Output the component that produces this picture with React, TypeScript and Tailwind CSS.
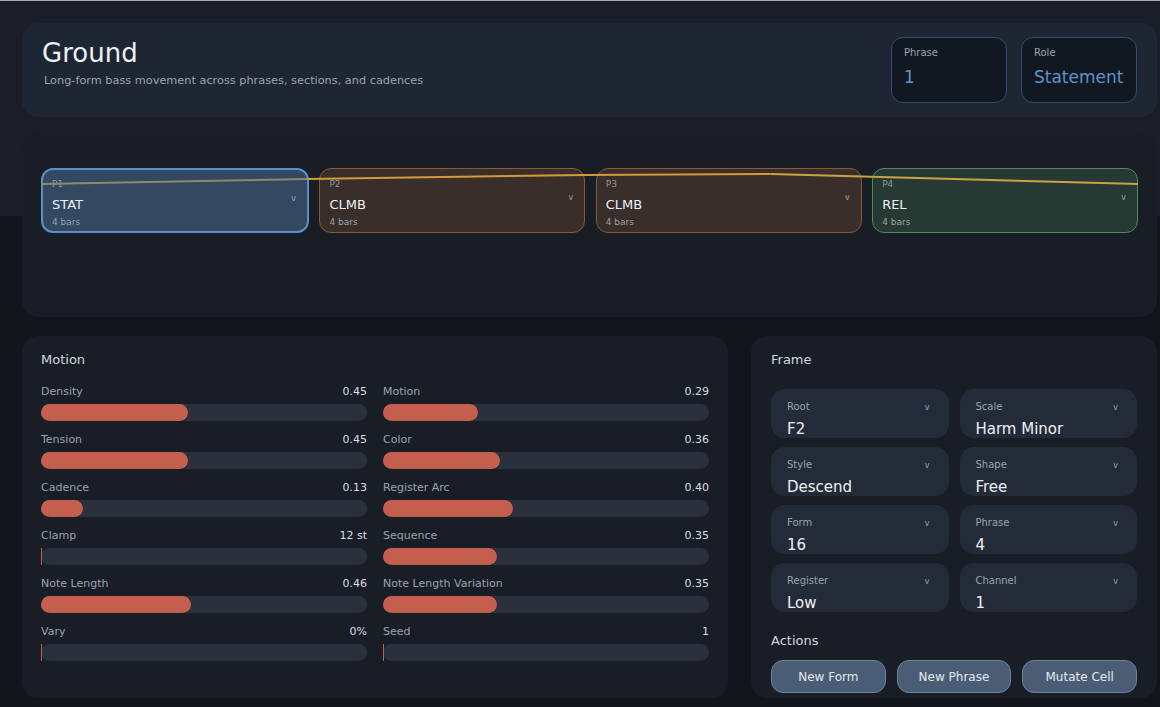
import React from 'react';

type Phrase = {
  id: string;
  role: string;
  bars: number;
  tone: 'stat' | 'climb' | 'rel';
};

type Knob = {
  label: string;
  value: string;
  amount: number;
};

const phrases: Phrase[] = [
  { id: 'P1', role: 'STAT', bars: 4, tone: 'stat' },
  { id: 'P2', role: 'CLMB', bars: 4, tone: 'climb' },
  { id: 'P3', role: 'CLMB', bars: 4, tone: 'climb' },
  { id: 'P4', role: 'REL', bars: 4, tone: 'rel' },
];

const leftKnobs: Knob[] = [
  { label: 'Density', value: '0.45', amount: 0.45 },
  { label: 'Tension', value: '0.45', amount: 0.45 },
  { label: 'Cadence', value: '0.13', amount: 0.13 },
  { label: 'Clamp', value: '12 st', amount: 0 },
  { label: 'Note Length', value: '0.46', amount: 0.46 },
  { label: 'Vary', value: '0%', amount: 0 },
];

const rightKnobs: Knob[] = [
  { label: 'Motion', value: '0.29', amount: 0.29 },
  { label: 'Color', value: '0.36', amount: 0.36 },
  { label: 'Register Arc', value: '0.40', amount: 0.4 },
  { label: 'Sequence', value: '0.35', amount: 0.35 },
  { label: 'Note Length Variation', value: '0.35', amount: 0.35 },
  { label: 'Seed', value: '1', amount: 0 },
];

const frameFields = [
  { label: 'Root', value: 'F2' },
  { label: 'Scale', value: 'Harm Minor' },
  { label: 'Style', value: 'Descend' },
  { label: 'Shape', value: 'Free' },
  { label: 'Form', value: '16' },
  { label: 'Phrase', value: '4' },
  { label: 'Register', value: 'Low' },
  { label: 'Channel', value: '1' },
];

const toneClass = {
  stat: 'bg-[#334861] border-2 border-[#5b8fc9] px-[9px] pt-[9px]',
  climb: 'bg-[#3a2e2a] border border-[#8a5a34] px-[9px] pt-[10px]',
  rel: 'bg-[#263a33] border border-[#4f8a5c] px-[9px] pt-[10px]',
};

const StatBox = ({ label, value }: { label: string; value: string }) => (
  <div className="h-[66px] w-[116px] rounded-[12px] border border-[#2f4d6e] bg-[#121821] px-[12px] pt-[8px]">
    <div className="text-[10px] leading-[14px] text-[#9aa4b1]">{label}</div>
    <div className="mt-[7px] text-[17px] leading-[20px] text-[#5b94ca]">{value}</div>
  </div>
);

const PhraseCell = ({ phrase }: { phrase: Phrase }) => (
  <div className={`relative h-[65px] flex-1 rounded-[12px] ${toneClass[phrase.tone]}`}>
    <div className="text-[9px] leading-[11px] text-[#8d96a3]">{phrase.id}</div>
    <div className="mt-[7px] text-[13px] leading-[16px] text-[#eef1f5]">{phrase.role}</div>
    <div className="mt-[4px] text-[9px] leading-[11px] text-[#9aa3ae]">{phrase.bars} bars</div>
    <span className="absolute right-[11px] top-[24px] text-[8px] leading-[10px] text-[#9aa3ae]">v</span>
  </div>
);

const Slider = ({ knob }: { knob: Knob }) => (
  <div className="flex flex-col">
    <div className="flex h-[14px] items-center justify-between text-[11px] leading-[14px]">
      <span className="text-[#9aa3ae]">{knob.label}</span>
      <span className="text-[#d8dde4]">{knob.value}</span>
    </div>
    <div className="mt-[5px] flex h-[17px] w-full rounded-full bg-[#2a313c]">
      {knob.amount > 0 ? (
        <div className="h-full rounded-full bg-[#c45f4d]" style={{ width: `${knob.amount * 100}%` }} />
      ) : (
        <div className="h-full w-px bg-[#c45f4d]" />
      )}
    </div>
  </div>
);

const SelectField = ({ label, value }: { label: string; value: string }) => (
  <div className="relative h-[49px] rounded-[14px] bg-[#232b38] px-[16px] pt-[12px]">
    <div className="text-[10px] leading-[12px] text-[#9aa3ae]">{label}</div>
    <div className="mt-[7px] text-[15px] leading-[18px] text-[#eef1f5]">{value}</div>
    <span className="absolute right-[19px] top-[14px] text-[8px] leading-[10px] text-[#9aa3ae]">v</span>
  </div>
);

export default function App() {
  return (
    <div
      className="min-h-[707px] w-full border-t border-[#a8acb3] bg-[linear-gradient(to_bottom,#1a1e28_215px,#12151b_215px)] pb-[8px] pl-[22px] pr-[3px] pt-[22px] text-white"
      style={{ fontFamily: '"DejaVu Sans", Verdana, sans-serif' }}
    >
      {/* header */}
      <div className="flex h-[94px] items-start justify-between rounded-[16px] bg-[#1e2633] px-[20px]">
        <div className="flex flex-col pt-[15px]">
          <h1 className="text-[26px] leading-[30px] text-[#eef1f5]">Ground</h1>
          <p className="ml-[2px] mt-[6px] text-[11.3px] leading-[14px] text-[#9aa4b1]">
            Long-form bass movement across phrases, sections, and cadences
          </p>
        </div>
        <div className="flex gap-[14px] pt-[14px]">
          <StatBox label="Phrase" value="1" />
          <StatBox label="Role" value="Statement" />
        </div>
      </div>

      {/* timeline */}
      <div className="mt-[16px] h-[184px] rounded-[16px] bg-[#191d26] px-[19px] pt-[35px]">
        <div className="relative flex gap-[10.5px]">
          {phrases.map((p) => (
            <PhraseCell key={p.id} phrase={p} />
          ))}
          <svg className="pointer-events-none absolute left-0 top-0 h-[65px] w-full" viewBox="0 0 1096 65" preserveAspectRatio="none">
            <polyline points="0,16 266,11" fill="none" stroke="#8e8b6c" strokeWidth="2" />
            <polyline points="266,11 543,7 729,6" fill="none" stroke="#d59a3a" strokeWidth="2" />
            <polyline points="729,6 1096,16" fill="none" stroke="#c8a443" strokeWidth="2" />
          </svg>
        </div>
      </div>

      {/* bottom */}
      <div className="mt-[19px] flex gap-[23px]">
        <div className="h-[362px] w-[706px] rounded-[16px] bg-[#191d26] px-[19px] pt-[16px]">
          <div className="text-[13px] leading-[16px] text-[#d3d8df]">Motion</div>
          <div className="mt-[17px] grid grid-cols-2 gap-x-[16px] gap-y-[12px]">
            {leftKnobs.map((k, i) => (
              <React.Fragment key={k.label}>
                <Slider knob={k} />
                <Slider knob={rightKnobs[i]} />
              </React.Fragment>
            ))}
          </div>
        </div>

        <div className="h-[362px] flex-1 rounded-[16px] bg-[#191d26] px-[20px] pt-[16px]">
          <div className="text-[13px] leading-[16px] text-[#d3d8df]">Frame</div>
          <div className="mt-[21px] grid grid-cols-2 gap-x-[11px] gap-y-[9px]">
            {frameFields.map((f) => (
              <SelectField key={f.label} label={f.label} value={f.value} />
            ))}
          </div>
          <div className="mt-[21px] text-[13px] leading-[16px] text-[#d3d8df]">Actions</div>
          <div className="mt-[11px] grid grid-cols-3 gap-[11px]">
            {['New Form', 'New Phrase', 'Mutate Cell'].map((b) => (
              <button
                key={b}
                type="button"
                className="h-[33px] rounded-[12px] border border-[#6c819b] bg-[#4a5d75] text-[12px] text-[#e3e8ef]"
              >
                {b}
              </button>
            ))}
          </div>
        </div>
      </div>
    </div>
  );
}
